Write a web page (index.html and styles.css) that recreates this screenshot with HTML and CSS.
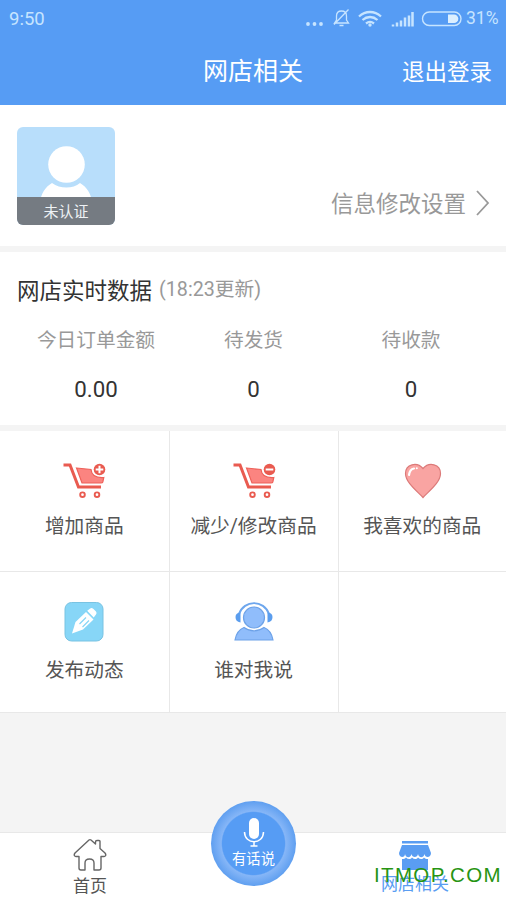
FILE: index.html
```html
<!DOCTYPE html>
<html lang="zh-CN">
<head>
<meta charset="utf-8">
<title>网店相关</title>
<link rel="stylesheet" href="styles.css">
</head>
<body>
<div class="app">
  <header class="header">
    <div class="status">
      <span class="time">9:50</span>
      <svg class="status-icons" width="158" height="24" viewBox="0 0 158 24" fill="none" stroke="#c6e4ff">
        <g fill="#c6e4ff" stroke="none"><circle cx="3" cy="16" r="1.900"/><circle cx="9.500" cy="16" r="1.900"/><circle cx="16" cy="16" r="1.900"/></g>
        <path d="M29.500 15h14l-2-3V8c0-3-2-5-5-5s-5 2-5 5v4zM34.500 17.500h4M43.500 1.500L29 16.500" stroke-width="1.300"/>
        <g stroke-width="2.300"><path d="M54 8.500c6.500-6 15.500-6 22 0M57.500 12c4.500-4 10.500-4 15 0M61 15.500c2.500-2 5.500-2 8 0"/></g>
        <circle cx="65" cy="17" r="1.700" fill="#c6e4ff" stroke="none"/>
        <path d="M88 18.500v-2M92 18.500v-4M96 18.500v-6M100 18.500v-9M104 18.500v-11M107.500 18.500V4" stroke-width="2.500"/>
        <rect x="117.500" y="4" width="38.500" height="13.500" rx="6.700" stroke-width="1.400"/>
        <path d="M143 6.500h6a4.300 4.300 0 0 1 0 8.600h-6z" fill="#dcefff" stroke="none"/>
      </svg>
      <span class="percent">31%</span>
    </div>
    <div class="titlebar">
      <h1>网店相关</h1>
      <span class="logout">退出登录</span>
    </div>
  </header>

  <section class="profile">
    <div class="avatar">
      <svg width="98" height="98" viewBox="0 0 98 98" fill="#fff"><circle cx="49.500" cy="37.500" r="18.300"/><path d="M23 75c1-8 5-15 12-19 8 6 21 6 28 0 7 4 11 11 12 19z"/></svg>
      <span class="badge">未认证</span>
    </div>
    <div class="settings">
      <span>信息修改设置</span>
      <svg width="16" height="28" viewBox="0 0 16 28" fill="none" stroke="#999" stroke-width="1.800"><path d="M2 2l11 12L2 26"/></svg>
    </div>
  </section>

  <section class="data">
    <div class="data-head"><h2>网店实时数据</h2><span>(18:23更新)</span></div>
    <div class="stats">
      <div class="stat"><span class="label">今日订单金额</span><span class="value">0.00</span></div>
      <div class="stat"><span class="label">待发货</span><span class="value">0</span></div>
      <div class="stat"><span class="label">待收款</span><span class="value">0</span></div>
    </div>
  </section>

  <section class="grid">
    <div class="cell">
      <svg width="46" height="44" viewBox="0 0 46 44" fill="none">
        <path d="M2.500 7H9l8.500 22h22.500" stroke="#e95b50" stroke-width="3"/>
        <path d="M15.500 10L30 11.500c.5 5.500 5 8.500 12.800 8l-1 4.500q-.3 1-1.800 1H21z" fill="#fb8480" stroke="#ee6159" stroke-width="1.200"/>
        <circle cx="38.500" cy="11.500" r="5.800" fill="#e95b50"/><path d="M34.700 11.500h7.600M38.500 7.700v7.600" stroke="#fff" stroke-width="2"/>
        <g stroke="#e95b50" stroke-width="1.900"><circle cx="21.500" cy="36.700" r="2.300"/><circle cx="36" cy="36.700" r="2.300"/></g>
      </svg>
      <span>增加商品</span>
    </div>
    <div class="cell">
      <svg width="46" height="44" viewBox="0 0 46 44" fill="none">
        <path d="M2.500 7H9l8.500 22h22.500" stroke="#e95b50" stroke-width="3"/>
        <path d="M15.500 10L30 11.500c.5 5.500 5 8.500 12.800 8l-1 4.500q-.3 1-1.800 1H21z" fill="#fb8480" stroke="#ee6159" stroke-width="1.200"/>
        <circle cx="38.500" cy="11.500" r="5.800" fill="#e95b50"/><path d="M34.700 11.500h7.600" stroke="#fff" stroke-width="2"/>
        <g stroke="#e95b50" stroke-width="1.900"><circle cx="21.500" cy="36.700" r="2.300"/><circle cx="36" cy="36.700" r="2.300"/></g>
      </svg>
      <span>减少/修改商品</span>
    </div>
    <div class="cell">
      <svg width="46" height="44" viewBox="-1 -1 46 44" fill="none">
        <path d="M23 38.500C17 32 5.500 23.500 5.500 14.500 5.500 5 17 2.500 23 9.500c6-7 17.500-4.500 17.500 5C40.500 23.500 29 32 23 38.500z" fill="#f9a4a2" stroke="#dc7a79" stroke-width="1.200"/>
        <path d="M9 16c.5-4 2.500-6 5-6.500" stroke="#fff" stroke-width="2.200" stroke-linecap="round"/><circle cx="16.800" cy="9.300" r="1" fill="#fff"/>
      </svg>
      <span>我喜欢的商品</span>
    </div>
    <div class="cell">
      <svg width="46" height="44" viewBox="0 0 46 44" fill="none">
        <rect x="4" y="3.500" width="38" height="38.500" rx="6.500" fill="#87d6f7" stroke="#79c3e2"/>
        <path d="M11 34.500l3.500-11.500L25 13l7.500 7.500L22 30.500z" fill="#fff"/>
        <path d="M26.200 11.800l3-2.300q1.500-1 3 .3l2.800 2.800q1.200 1.500 0 3l-2.300 3z" fill="#fff"/>
        <path d="M18.500 25l6.500-6.500M21.500 28l6.500-6.500" stroke="#87d6f7" stroke-width="1.200"/>
      </svg>
      <span>发布动态</span>
    </div>
    <div class="cell">
      <svg width="46" height="44" viewBox="0 -1 46 44" fill="none">
        <path d="M8 14C13-.5 33-.5 38 14" stroke="#6da6ed" stroke-width="1.900"/>
        <path d="M9.500 12.500v10C6 22 4.500 20 4.500 17s2-4.500 5-4.500zM36.500 12.500v10c3.500-.5 5-2.500 5-5.500s-2-4.500-5-4.500z" fill="#5a9dee"/>
        <circle cx="23" cy="17.500" r="10.500" fill="#90bdfb" stroke="#6da2e8" stroke-width="1.200"/>
        <path d="M4 40c1-6 4-10.500 9-12.500 6 4.500 14 4.500 20 0 5 2 8 6.500 9 12.500z" fill="#90bdfb" stroke="#6da2e8" stroke-width="1.200"/>
      </svg>
      <span>谁对我说</span>
    </div>
    <div class="cell"></div>
  </section>

  <nav class="nav">
    <div class="tab home">
      <svg width="34" height="34" viewBox="0 0 34 34" fill="none" stroke="#666" stroke-width="1.400" stroke-linejoin="round"><path d="M16 2L2 15q-2 3 1 3.500h3V30q0 2 2 2h4v-7q0-4 4.500-4t4.500 4v7h5q2 0 2-2V18.500h3q3-.5 1-3.500l-5-4.500V3.500q0-1-1-1h-2q-1.500 0-1.500 1.500v2L18 2q-1-.8-2 0z"/></svg>
      <span>首页</span>
    </div>
    <div class="talk">
      <svg width="26" height="32" viewBox="0 0 26 32" fill="none" stroke="#fff" stroke-width="1.500"><rect x="8" y="1" width="10" height="21" rx="5" fill="#fff" stroke="none"/><path d="M3.500 15c0 13 19 13 19 0M13 25v4M9.500 29h7"/></svg>
      <span>有话说</span>
    </div>
    <div class="tab shop">
      <svg width="34" height="34" viewBox="0 0 34 34" fill="#5a9df2"><path d="M4 3h26v2.500H4zM4 7h26l3 8c0 5-6 5-6.500 1-1 4.500-6 4-6.500 0-.5 4-6 4-6.500 0-.5 4-5.500 4.500-6.500 0C7 20 1 20 1 15z"/><path d="M4 21c2 0 3-.5 4-1.500 2 2 4.500 2 6 0 2 2 4.500 2 6 0 2 2 4.500 2 6 0 1 1 2 1.500 4 1.500v11H4z"/></svg>
      <span>网店相关</span>
    </div>
    <span class="mark">ITMOP.COM</span>
  </nav>
</div>
</body>
</html>
```
FILE: styles.css
```css
* { box-sizing: border-box; }
body { margin: 0; font-family: Roboto, "Noto Sans CJK SC", sans-serif; }
svg { display: block; flex: none; }
h1, h2 { margin: 0; font-weight: 400; }
.app { width: 506px; height: 900px; display: flex; flex-direction: column; background: #f4f4f4; overflow: hidden; }
.header { height: 105px; flex: none; background: #569cf4; color: #fff; }
.status { height: 36px; display: flex; align-items: center; padding: 0 6px 0 9px; color: #c6e4ff; }
.time { font-size: 18.5px; margin-top: 1px; }
.status-icons { margin-left: auto; margin-top: 3px; }
.percent { width: 34px; font-size: 17.5px; margin-left: 3px; white-space: nowrap; }
.titlebar { height: 69px; display: grid; grid-template-columns: 1fr auto 1fr; align-items: center; padding: 2px 14px 0; }
.titlebar h1 { grid-column: 2; font-size: 25px; line-height: 36px; font-weight: 400; }
.logout { justify-self: end; font-size: 22.5px; line-height: 34px; }
.profile { height: 141px; flex: none; display: flex; justify-content: space-between; padding: 22px 15px 0 17px; background: #fff; }
.avatar { position: relative; width: 98px; height: 98px; border-radius: 6px; background: #b8defb; overflow: hidden; }
.badge { position: absolute; left: 0; right: 0; bottom: 0; height: 28px; background: #757b82; color: #eef2f5; font-size: 15px; line-height: 31px; text-align: center; }
.settings { display: flex; align-items: center; gap: 9px; height: 34px; margin-top: 59px; font-size: 22.5px; color: #999; }
.settings span { line-height: 34px; margin-top: 2px; }
.data { height: 173px; flex: none; margin-top: 6px; padding-top: 22px; background: #fff; }
.data-head { display: flex; align-items: center; gap: 7px; padding-left: 17px; height: 34px; color: #999; font-size: 19.7px; }
.data-head h2 { font-size: 22.5px; line-height: 34px; color: #333; }
.data-head span { line-height: 30px; margin-top: -2px; }
.stats { display: grid; grid-template-columns: 158px 157px 158px; padding-left: 17px; margin-top: 18px; }
.stat { display: flex; flex-direction: column; align-items: center; }
.label { font-size: 19.7px; line-height: 30px; color: #999; }
.value { margin-top: 17px; font-size: 22.3px; line-height: 32px; color: #333; }
.grid { height: 282px; flex: none; margin-top: 6px; display: grid; grid-template-columns: 169.500px 169px 1fr; grid-template-rows: 141px 141px; background: #fff; }
.cell { display: flex; flex-direction: column; align-items: center; padding-top: 27px; border-right: 1px solid #e8e8e8; border-bottom: 1px solid #e8e8e8; font-size: 19.7px; line-height: 30px; color: #555; }
.cell:nth-child(3n) { border-right: 0; }
.cell span { margin-top: 10px; white-space: nowrap; }
.cell:nth-child(n+4) span { margin-top: 13px; }
.nav { position: relative; height: 68px; flex: none; margin-top: auto; display: flex; justify-content: space-between; background: #fff; border-top: 1px solid #e8e8e8; }
.tab { display: flex; flex-direction: column; align-items: center; width: 180px; padding-top: 5px; font-size: 17px; line-height: 24px; color: #555; }
.shop { width: 182px; color: #5a9df2; }
.tab span { margin-top: 2px; }
.shop span { margin-top: 0; }
.talk { position: absolute; left: 211px; top: -32px; width: 85px; height: 85px; border-radius: 50%; background: radial-gradient(circle closest-side, #569cf4 0 73%, #86b6f7 76%, #5f9ff0 100%); display: flex; flex-direction: column; align-items: center; padding-top: 16px; color: #fff; font-size: 14.3px; line-height: 20px; }
.mark { position: absolute; left: 374px; top: 30px; font-family: "Liberation Sans", sans-serif; font-size: 20.5px; line-height: 24px; letter-spacing: 1.35px; color: #279413; }
```
